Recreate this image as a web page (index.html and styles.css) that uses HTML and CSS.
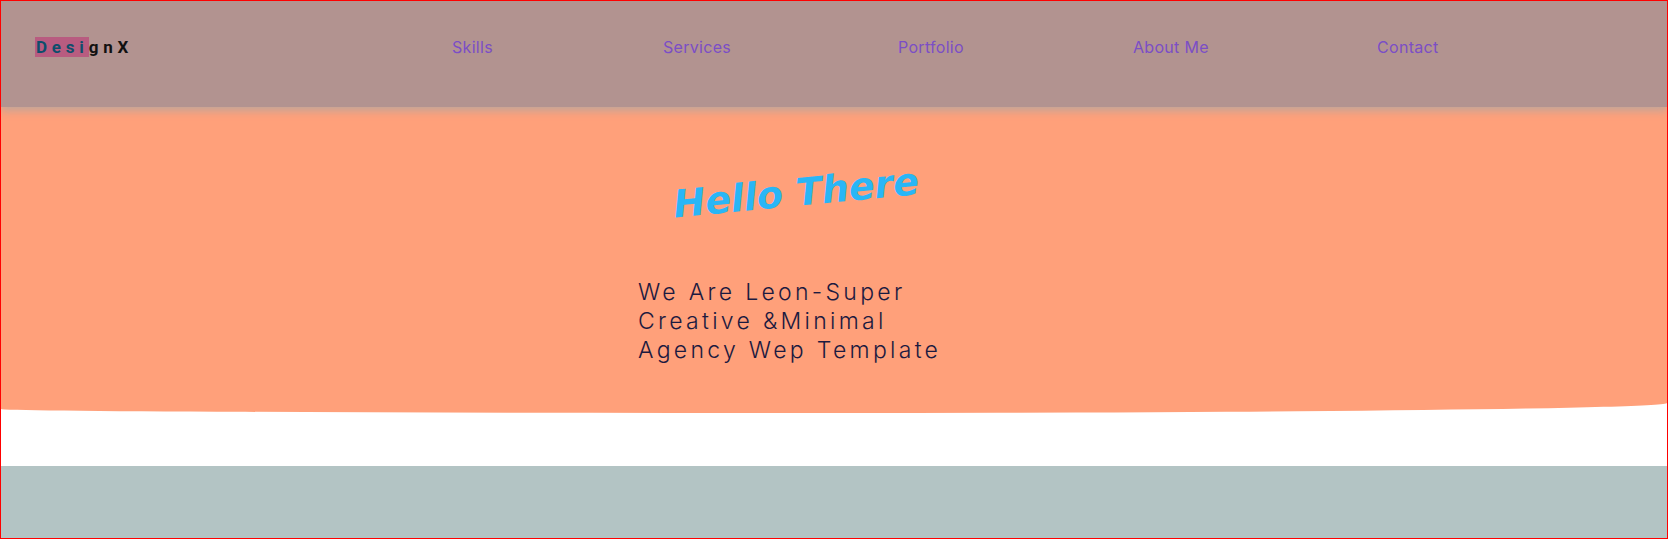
FILE: index.html
```html
<!DOCTYPE html>
<html lang="en">
<head>
<meta charset="utf-8">
<title>DesignX</title>
<link rel="stylesheet" href="styles.css">
</head>
<body>
<div class="page">
  <header class="header">
    <div class="logo"><span class="hl">Desi</span>gnX</div>
    <nav class="nav">
      <a href="#">Skills</a>
      <a href="#">Services</a>
      <a href="#">Portfolio</a>
      <a href="#">About Me</a>
      <a href="#">Contact</a>
    </nav>
  </header>
  <section class="hero">
    <div class="hero-inner">
      <h1 class="hello">Hello There</h1>
      <p class="tagline">We Are Leon-Super<br>Creative &amp;Minimal<br>Agency Wep Template</p>
    </div>
  </section>
  <section class="next"></section>
</div>
</body>
</html>
```
FILE: styles.css
```css
html, body {
  margin: 0;
  padding: 0;
}
body {
  background: #ffffff;
  font-family: "Inter", "Liberation Sans", sans-serif;
}
.page {
  box-sizing: border-box;
  height: 539px;
  border: 1px solid #ff0000;
  overflow: hidden;
  display: flex;
  flex-direction: column;
}
.header {
  position: relative;
  z-index: 2;
  height: 106px;
  flex: none;
  background: #b29390;
  box-shadow: 0 4px 8px rgba(190, 165, 155, 0.95);
  display: flex;
  align-items: center;
}
.logo {
  margin-left: 35px;
  width: 416px;
  font-family: "Roboto", "Liberation Sans", sans-serif;
  font-weight: 700;
  font-size: 17px;
  letter-spacing: 4.8px;
  color: #111111;
  line-height: 22px;
  margin-top: -14px;
}
.hl {
  background: #b85c80;
  color: #0e4e6c;
  padding-left: 1px;
  margin-left: -1px;
}
.nav {
  display: grid;
  grid-template-columns: 211px 235px 235px 244px auto;
  margin-top: -14px;
}
.nav a {
  font-family: "Inter", "Liberation Sans", sans-serif;
  font-size: 16px;
  color: #7b4ec6;
  text-decoration: none;
  letter-spacing: 0.3px;
}
.hero {
  position: relative;
  z-index: 1;
  height: 306px;
  flex: none;
  background: #ffa07a;
  border-bottom-left-radius: 50% 4px;
  border-bottom-right-radius: 50% 10px;
}
.hero-inner {
  width: 392px;
  margin: 0 auto;
  padding-top: 64px;
}
.hello {
  margin: 0 0 0 35px;
  width: 242px;
  text-align: center;
  font-family: "DejaVu Sans", "Verdana", sans-serif;
  font-style: italic;
  font-weight: 700;
  font-size: 38px;
  line-height: 44px;
  color: #29b6f6;
  transform: rotate(-5.5deg);
  white-space: nowrap;
}
.tagline {
  margin: 63px 0 0 0;
  font-family: "Inter", "Liberation Sans", sans-serif;
  font-weight: 300;
  font-size: 23px;
  line-height: 29px;
  letter-spacing: 3.3px;
  color: #1c1a40;
}
.next {
  margin-top: 53px;
  flex: 1;
  background: #b3c4c4;
}
```
